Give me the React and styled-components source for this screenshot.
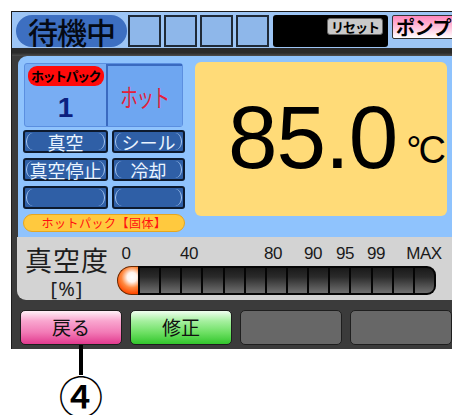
import React from "react";
import styled, { createGlobalStyle } from "styled-components";

const Global = createGlobalStyle`
  html, body { margin: 0; padding: 0; background: #fff; overflow: hidden; }
  body { font-family: "Noto Sans CJK JP", "Noto Sans", sans-serif; }
`;

const Page = styled.div`
  width: 452px;
  height: 415px;
  overflow: hidden;
  box-sizing: border-box;
  padding: 11px 0 0 11px;
`;

const Screen = styled.div`
  width: 460px;
  background: #3b3b3b;
  border-top: 1px solid #1c1c1c;
  border-left: 1px solid #1c1c1c;
  display: flex;
  flex-direction: column;
`;

const TopBar = styled.div`
  height: 36px;
  box-sizing: border-box;
  background: #9dc5f5;
  display: flex;
  align-items: flex-start;
  padding: 3px 0 0 4px;
`;

const StatusPill = styled.div`
  width: 111px;
  height: 32px;
  border-radius: 16px;
  background: #3d6fc1;
  color: #050a14;
  font-size: 30px;
  font-weight: 500;
  line-height: 32px;
  text-align: center;
  letter-spacing: -1px;
`;

const Squares = styled.div`
  display: flex;
  gap: 3px;
  margin-left: 1px;
`;

const Square = styled.div`
  width: 33px;
  height: 32px;
  box-sizing: border-box;
  border: 2px solid #1f2a38;
  background: #8eb7ea;
`;

const BlackBox = styled.div`
  width: 115px;
  height: 32px;
  margin-left: 4px;
  border-radius: 3px;
  background: #000;
  display: flex;
  justify-content: flex-end;
  align-items: flex-start;
  padding: 3px 5px 0 0;
  box-sizing: border-box;
`;

const ResetKey = styled.div`
  width: 56px;
  height: 17px;
  box-sizing: border-box;
  border: 1px solid #666;
  border-radius: 3px;
  background: #c9c9c9;
  color: #000;
  font-size: 13px;
  font-weight: 700;
  line-height: 15px;
  text-align: center;
  letter-spacing: -1px;
`;

const PumpKey = styled.div`
  margin-left: 4px;
  width: 70px;
  height: 24px;
  box-sizing: border-box;
  border: 1px solid #333;
  border-radius: 2px;
  background: linear-gradient(#ff86bb, #ffc6de 55%, #ffffff);
  color: #000;
  font-size: 19px;
  font-weight: 700;
  line-height: 22px;
  padding-left: 3px;
  letter-spacing: -0.5px;
`;

const Band = styled.div`
  height: 8px;
  background: linear-gradient(#2a2a2a, #2a2a2a 60%, #4c4c4c);
`;

const MainPanel = styled.div`
  margin-left: 6px;
  height: 181px;
  box-sizing: border-box;
  background: #8fc3fd;
  border-radius: 9px 0 0 0;
  display: flex;
  align-items: flex-start;
  padding: 7px 0 0 5px;
`;

const LeftCol = styled.div`
  width: 162px;
  display: flex;
  flex-direction: column;
`;

const HotPackBox = styled.div`
  margin-left: 1px;
  width: 159px;
  height: 64px;
  box-sizing: border-box;
  border: 1px solid #5b8fe0;
  border-radius: 3px;
  background: #78adf3;
  display: grid;
  grid-template-columns: 81px 1fr;
`;

const PackCell = styled.div`
  display: flex;
  flex-direction: column;
  align-items: center;
`;

const RedPill = styled.div`
  margin-top: 2px;
  width: 76px;
  height: 20px;
  border-radius: 9px;
  background: #ff0a0a;
  color: #000;
  font-size: 13px;
  font-weight: 700;
  line-height: 20px;
  text-align: center;
  letter-spacing: -1.5px;
`;

const PackNumber = styled.div`
  margin-top: 8px;
  font-family: "Liberation Sans", Arial, sans-serif;
  font-weight: 700;
  font-size: 28px;
  line-height: 28px;
  color: #0b2080;
`;

const HotCell = styled.div`
  border-left: 2px solid #3a6ac0;
  border-top: 2px solid #3a6ac0;
  background: #6ea6f1;
  display: flex;
  align-items: center;
  justify-content: center;
  overflow: hidden;
`;

const HotText = styled.span`
  display: inline-block;
  white-space: nowrap;
  color: #e3203a;
  font-size: 25px;
  line-height: 28px;
  transform: scaleX(0.7);
  letter-spacing: -2px;
`;

const ModeGrid = styled.div`
  margin-top: 3px;
  display: grid;
  grid-template-columns: 85px 73px;
  grid-auto-rows: 23px;
  column-gap: 4px;
  row-gap: 5px;
`;

const ModeKey = styled.div`
  position: relative;
  box-sizing: border-box;
  background: #2f5fa6;
  border: 2px solid #0d1a2e;
  border-radius: 3px;
  color: #eaf4ff;
  font-size: 18px;
  line-height: 1;
  display: flex;
  align-items: center;
  justify-content: center;
  &::before {
    content: "";
    position: absolute;
    inset: 1px 1px;
    border-left: 1px solid #a9c9f2;
    border-right: 1px solid #a9c9f2;
    border-radius: 8px / 10px;
  }
`;

const StatePill = styled.div`
  margin-top: 5px;
  height: 18px;
  box-sizing: border-box;
  border: 1px solid #e5a620;
  border-radius: 9px;
  background: #ffc93e;
  color: #ff1010;
  font-size: 12px;
  line-height: 16px;
  text-align: center;
  letter-spacing: 0.5px;
`;

const TempBox = styled.div`
  margin: -1px 0 0 10px;
  width: 252px;
  height: 154px;
  box-sizing: border-box;
  border-radius: 6px;
  background: #ffdb78;
  display: flex;
  align-items: center;
  padding: 0 0 4px 33px;
`;

const TempLine = styled.div`
  font-family: "Liberation Sans", Arial, sans-serif;
  color: #000;
  line-height: 1;
  white-space: nowrap;
`;

const TempValue = styled.span`
  font-size: 89px;
  letter-spacing: -1px;
`;

const TempUnit = styled.span`
  font-size: 38px;
  margin-left: 9px;
  vertical-align: 5px;
  letter-spacing: -3px;
`;

const VacuumPanel = styled.div`
  margin-left: 5px;
  height: 63px;
  box-sizing: border-box;
  background: #d3d3d3;
  border-radius: 0 0 0 9px;
  display: flex;
`;

const LabelCol = styled.div`
  width: 100px;
  display: flex;
  flex-direction: column;
  align-items: center;
  color: #1e1e1e;
  padding-top: 9px;
`;

const VacLabel = styled.div`
  font-size: 27px;
  line-height: 27px;
  height: 27px;
  letter-spacing: 1px;
`;

const UnitLabel = styled.div`
  margin-top: 7px;
  font-size: 20px;
  line-height: 17px;
  height: 17px;
  font-family: "Noto Sans", sans-serif;
  letter-spacing: 1px;
`;

const ScaleCol = styled.div`
  display: flex;
  flex-direction: column;
`;

const Ticks = styled.div`
  position: relative;
  width: 319px;
  height: 29px;
`;

const Tick = styled.span`
  position: absolute;
  bottom: 4px;
  transform: translateX(-50%);
  font-family: "Liberation Sans", Arial, sans-serif;
  font-size: 17px;
  line-height: 17px;
  color: #1a1a1a;
  letter-spacing: -0.5px;
`;

const Bar = styled.div`
  width: 319px;
  height: 29px;
  display: flex;
`;

const BarCap = styled.div`
  width: 21px;
  height: 29px;
  box-sizing: border-box;
  border-radius: 15px 0 0 15px;
  border: 1px solid #6b2a00;
  border-right: none;
  background: radial-gradient(circle at 70% 38%, #ffffff 0, #fff4ee 22%, #ff8a40 48%, #ff4a00 75%, #d83800 100%);
`;

const Segment = styled.div`
  flex: 1;
  height: 29px;
  box-sizing: border-box;
  border: 2px solid #050505;
  border-left-width: ${(p) => (p.$first ? 2 : 0)}px;
  border-radius: ${(p) => (p.$last ? "0 9px 9px 0" : "0")};
  background: linear-gradient(#1a1a1a, #2a2a2a 35%, #5a5a5a 80%, #6e6e6e);
`;

const BottomBar = styled.div`
  display: flex;
  gap: 8px;
  padding: 10px 0 4px 8px;
`;

const SoftKey = styled.div`
  width: 102px;
  height: 35px;
  box-sizing: border-box;
  border: 1px solid #1e1e1e;
  border-radius: 5px;
  font-size: 19px;
  line-height: 32px;
  text-align: center;
  color: #111;
  background: ${(p) =>
    p.$tone === "pink"
      ? "linear-gradient(#fff0f7, #f9a6cf 30%, #f27ab6 65%, #e2398e)"
      : p.$tone === "green"
      ? "linear-gradient(#f0fff0, #a6f0a0 30%, #6ee064 65%, #32c62c)"
      : "#676767"};
`;

const Callout = styled.div`
  width: 40px;
  margin-left: 50px;
  display: flex;
  flex-direction: column;
  align-items: center;
  position: relative;
  z-index: 1;
`;

const Leader = styled.div`
  width: 4px;
  height: 30px;
  margin-top: -4px;
  background: #000;
`;

const CalloutMark = styled.div`
  margin-top: 9px;
  font-size: 24px;
  font-weight: 500;
  line-height: 24px;
  height: 24px;
  color: #000;
  transform: scale(1.85);
  transform-origin: 50% 50%;
`;

const ticks = [
  ["0", 9],
  ["40", 72],
  ["80", 156],
  ["90", 196],
  ["95", 228],
  ["99", 259],
  ["MAX", 307],
];

export default function App() {
  return (
    <>
      <Global />
      <Page>
        <Screen>
          <TopBar>
            <StatusPill>待機中</StatusPill>
            <Squares>
              <Square />
              <Square />
              <Square />
              <Square />
            </Squares>
            <BlackBox>
              <ResetKey>リセット</ResetKey>
            </BlackBox>
            <PumpKey>ポンプ</PumpKey>
          </TopBar>
          <Band />
          <MainPanel>
            <LeftCol>
              <HotPackBox>
                <PackCell>
                  <RedPill>ホットパック</RedPill>
                  <PackNumber>1</PackNumber>
                </PackCell>
                <HotCell>
                  <HotText>ホット</HotText>
                </HotCell>
              </HotPackBox>
              <ModeGrid>
                <ModeKey>真空</ModeKey>
                <ModeKey>シール</ModeKey>
                <ModeKey>真空停止</ModeKey>
                <ModeKey>冷却</ModeKey>
                <ModeKey />
                <ModeKey />
              </ModeGrid>
              <StatePill>ホットパック【固体】</StatePill>
            </LeftCol>
            <TempBox>
              <TempLine>
                <TempValue>85.0</TempValue>
                <TempUnit>°C</TempUnit>
              </TempLine>
            </TempBox>
          </MainPanel>
          <VacuumPanel>
            <LabelCol>
              <VacLabel>真空度</VacLabel>
              <UnitLabel>[%]</UnitLabel>
            </LabelCol>
            <ScaleCol>
              <Ticks>
                {ticks.map(([t, x]) => (
                  <Tick key={t} style={{ left: x }}>
                    {t}
                  </Tick>
                ))}
              </Ticks>
              <Bar>
                <BarCap />
                {Array.from({ length: 14 }, (_, i) => (
                  <Segment key={i} $first={i === 0} $last={i === 13} />
                ))}
              </Bar>
            </ScaleCol>
          </VacuumPanel>
          <BottomBar>
            <SoftKey $tone="pink">戻る</SoftKey>
            <SoftKey $tone="green">修正</SoftKey>
            <SoftKey />
            <SoftKey />
          </BottomBar>
        </Screen>
        <Callout>
          <Leader />
          <CalloutMark>④</CalloutMark>
        </Callout>
      </Page>
    </>
  );
}
